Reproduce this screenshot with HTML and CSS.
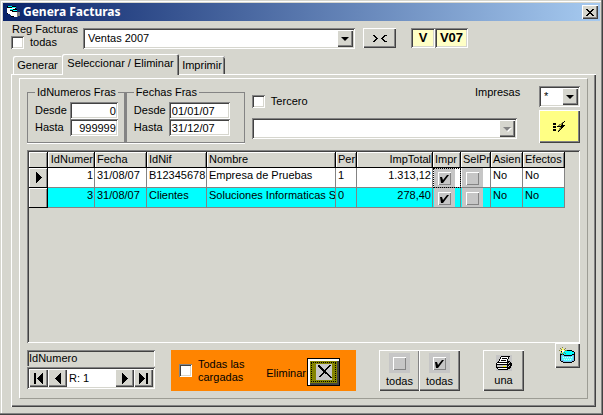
FILE: index.html
```html
<!DOCTYPE html>
<html lang="es">
<head>
<meta charset="utf-8">
<title>Genera Facturas</title>
<meta name="viewport" content="width=device-width, initial-scale=1">
<link rel="stylesheet" href="styles.css">
</head>
<body>
<main class="window">
  <header class="titlebar">
    <svg class="app-icon" width="14" height="14" viewBox="0 0 14 14" shape-rendering="crispEdges" aria-hidden="true">
      <path fill="#808080" d="M10 7h3v4h-3zM9 11h2v1H9z"/>
      <path fill="#000" d="M0 1h9v3h1v8H4V9H0z"/>
      <path fill="#0ff" d="M1 1h4v1h4v1H5V2H1z"/>
      <path fill="#fff" d="M1 3h7v1H3v5H1V8H0V3z"/>
      <path fill="#0ff" d="M3 4h3v1h4v1H6V5H3z"/>
      <path fill="#fff" d="M3 6h2v1h5v5H7v-1H4v-1H3z"/>
    </svg>
    <h1 class="title">Genera Facturas</h1>
    <button class="btn close" type="button" aria-label="Cerrar">
      <svg width="8" height="7" viewBox="0 0 8 7" shape-rendering="crispEdges"><path d="M0 0h2v1h1v1h2V1h1V0h2v1H7v1H6v1H5v1h1v1h1v1h1v1H6V6H5V5H3v1H2v1H0V6h1V5h1V4h1V3H2V2H1V1H0z"/></svg>
    </button>
  </header>

  <div class="toolbar">
    <div class="register">
      <span>Reg Facturas</span>
      <label class="check-label"><input class="check" type="checkbox"> todas</label>
    </div>
    <div class="combo combo-register">
      <select aria-label="Registro de facturas"><option>Ventas 2007</option></select>
      <span class="btn arrow"></span>
    </div>
    <button class="btn swap" type="button" aria-label="Intercambiar">
      <svg width="14" height="7" viewBox="0 0 14 7" shape-rendering="crispEdges"><path d="M0 0h2v1h1v1h1v1h1v1H4v1H3v1H2v1H0V6h1V5h1V4h1V3H2V2H1V1H0zM14 0h-3v1h-1v1H9v1H8v1h1v1h1v1h1v1h3V6h-2V5h-1V4h-1V3h1V2h1V1h2z"/></svg>
    </button>
    <div class="codes">
      <output class="code code-short">V</output>
      <output class="code">V07</output>
    </div>
  </div>

  <section class="tabs">
    <div class="tablist" role="tablist">
      <button class="tab tab-first" role="tab" type="button">Generar</button>
      <button class="tab selected" role="tab" type="button" aria-selected="true">Seleccionar / Eliminar</button>
      <button class="tab tab-last" role="tab" type="button">Imprimir</button>
    </div>
    <div class="page" role="tabpanel">
      <div class="frame">
        <div class="filters">
          <fieldset class="range range-ids">
            <legend>IdNumeros Fras</legend>
            <label for="id-from">Desde</label><input id="id-from" class="field number" type="text" value="0">
            <label for="id-to">Hasta</label><input id="id-to" class="field number" type="text" value="999999">
          </fieldset>
          <fieldset class="range range-dates">
            <legend>Fechas Fras</legend>
            <label for="date-from">Desde</label><input id="date-from" class="field" type="text" value="01/01/07">
            <label for="date-to">Hasta</label><input id="date-to" class="field" type="text" value="31/12/07">
          </fieldset>
          <div class="third">
            <label class="check-label"><input class="check" type="checkbox"> Tercero</label>
            <div class="combo">
              <select aria-label="Tercero" disabled><option></option></select>
              <span class="btn arrow arrow-off"></span>
            </div>
          </div>
          <label class="printed-label" for="printed">Impresas</label>
          <div class="printed">
            <div class="combo">
              <select id="printed"><option>*</option></select>
              <span class="btn arrow"></span>
            </div>
            <button class="btn run" type="button" aria-label="Filtrar">
              <svg width="13" height="12" viewBox="0 0 13 12" shape-rendering="crispEdges">
                <path d="M0 2h3v2H0zM0 5h3v2H0zM0 8h3v2H0z"/>
                <path fill="#848442" d="M6 3h2v1H7v1H5V4h1zM9 1h2v1h-1v2H8V2h1zM8 6h1v1H8v1H7v1H6v1H5V9h1V7h1V6z"/>
                <path fill="#ff0" d="M7 4h2v1H8v1H6V5h1z"/>
                <path d="M11 0h1v1h-1v1h-1v2h2v1h-1v1h-1v1H9v1H8v1H7v1H6v1H5v-1h1V9h1V8h1V6H5V5h1v0h2V4h1V2h1V1h1zM4 5h1v1H4z"/>
              </svg>
            </button>
          </div>
        </div>

        <div class="grid">
          <table>
            <colgroup>
              <col class="c-mark"><col class="c-id"><col class="c-date"><col class="c-nif"><col class="c-name"><col class="c-per"><col class="c-total"><col class="c-impr"><col class="c-sel"><col class="c-asien"><col class="c-efec">
            </colgroup>
            <thead>
              <tr><th></th><th class="right">IdNumer</th><th>Fecha</th><th>IdNif</th><th>Nombre</th><th>Per</th><th class="right">ImpTotal</th><th>Impr</th><th>SelPr</th><th>Asien</th><th>Efectos</th></tr>
            </thead>
            <tbody>
              <tr>
                <th scope="row"><svg class="marker" width="6" height="11" viewBox="0 0 6 11" shape-rendering="crispEdges"><path d="M0 0h1v1h1v1h1v1h1v1h1v1h1v1H5v1H4v1H3v1H2v1H1v1H0z"/></svg></th>
                <td class="right">1</td><td>31/08/07</td><td>B12345678</td><td>Empresa de Pruebas</td><td>1</td><td class="right">1.313,12</td>
                <td class="tick current"><span class="patch"><input class="box" type="checkbox" checked aria-label="Impr"></span></td>
                <td class="tick"><span class="patch"><input class="box" type="checkbox" aria-label="SelPr"></span></td>
                <td>No</td><td>No</td>
              </tr>
              <tr class="alt">
                <th scope="row"></th>
                <td class="right">3</td><td>31/08/07</td><td>Clientes</td><td>Soluciones Informaticas S</td><td>0</td><td class="right">278,40</td>
                <td class="tick"><span class="patch"><input class="box" type="checkbox" checked aria-label="Impr"></span></td>
                <td class="tick"><span class="patch"><input class="box" type="checkbox" aria-label="SelPr"></span></td>
                <td>No</td><td>No</td>
              </tr>
            </tbody>
          </table>
        </div>

        <div class="actions">
          <div class="record">
            <output class="record-field">IdNumero</output>
            <div class="navigator">
              <button class="btn nav" type="button" aria-label="Primero"><svg width="9" height="11" viewBox="0 0 9 11" shape-rendering="crispEdges"><path d="M0 0h2v11H0zM8 0h1v11H8v-1H7V9H6V8H5V7H4V6H3V5h1V4h1V3h1V2h1V1h1z"/></svg></button>
              <button class="btn nav" type="button" aria-label="Anterior"><svg width="6" height="11" viewBox="0 0 6 11" shape-rendering="crispEdges"><path d="M5 0h1v11H5v-1H4V9H3V8H2V7H1V6H0V5h1V4h1V3h1V2h1V1h1z"/></svg></button>
              <output class="position">R: 1</output>
              <button class="btn nav" type="button" aria-label="Siguiente"><svg width="6" height="11" viewBox="0 0 6 11" shape-rendering="crispEdges"><path d="M0 0h1v1h1v1h1v1h1v1h1v1h1v1H5v1H4v1H3v1H2v1H1v1H0z"/></svg></button>
              <button class="btn nav" type="button" aria-label="Último"><svg width="9" height="11" viewBox="0 0 9 11" shape-rendering="crispEdges"><path d="M7 0h2v11H7zM0 0h1v1h1v1h1v1h1v1h1v1h1v1H5v1H4v1H3v1H2v1H1v1H0z"/></svg></button>
            </div>
          </div>
          <div class="delete">
            <label class="check-label"><input class="check" type="checkbox"> <span>Todas las<br>cargadas</span></label>
            <span class="delete-label" id="delete-label">Eliminar</span>
            <button class="delete-btn" type="button" aria-labelledby="delete-label">
              <svg width="16" height="16" viewBox="0 0 16 16" shape-rendering="crispEdges">
                <path fill="#c6c6c6" d="M0 0h16v16H0z"/>
                <path d="M2 1h2v1h1v1h1v1h1v1h1v1h1V5h1V4h1V3h1V2h1V1h2v1h-1v1h-1v1h-1v1h-1v1h-1v2h1v1h1v1h1v1h1v1h1v1h1v1h-2v-1h-1v-1h-1v-1h-1v-1H9V9H8v1H7v1H6v1H5v1H3v-1h1v-1h1v-1h1V9h1V7H6V6H5V5H4V4H3V3H2z"/>
              </svg>
            </button>
          </div>
          <div class="mark-buttons">
            <button class="btn tile" type="button"><span class="patch"><span class="box"></span></span>todas</button>
            <button class="btn tile" type="button"><span class="patch"><span class="box checked"></span></span>todas</button>
          </div>
          <button class="btn tile print" type="button">
            <svg width="16" height="16" viewBox="0 0 16 16" shape-rendering="crispEdges">
              <path fill="#c6c6c6" d="M0 0h16v16H0z"/>
              <path d="M5 1h9v1h-1v2h-1v2h2v1h1v1h1v3h-1v2h-1v1h-2v1H2v-1H1v-1H0V8h1V7h1V6h1V4h1V2h1z"/>
              <path fill="#fff" d="M5 2h7v2h-1v3H3V6h1V4h1zM1 8h10v1H1zM2 13h9v1H2z"/>
              <path d="M6 3h5v1H6zM5 5h5v1H5z"/>
              <path fill="#c6c6c6" d="M1 10h10v2H1zM12 8h1v1h-1zM13 7h1v1h-1zM12 11h1v1h-1zM13 10h1v1h-1z"/>
              <path fill="#ff0" d="M7 11h3v1H7z"/>
            </svg>una
          </button>
          <button class="btn new" type="button" aria-label="Nuevo">
            <svg width="17" height="17" viewBox="0 0 17 17" shape-rendering="crispEdges">
              <path d="M5 3h8v1h2v1h1v9h-1v1h-2v1H4v-1H2v-1H1V6h1V4h3z"/>
              <path fill="#0ff" d="M5 4h8v1h2v2h-2v1H5V7H2V5h3z"/>
              <path fill="#7be" d="M2 8h3v1h8V8h2v6h-2v1H4v-1H2z"/>
              <path fill="#5ff" d="M3 9h2v1h7V9h2v4h-2v1H5v-1H3z"/>
              <path fill="#cff" d="M4 10h1v1H4zM6 10h1v1H6zM8 10h1v1H8zM10 10h1v1h-1zM12 10h1v1h-1zM5 12h1v1H5zM7 12h1v1H7zM9 12h1v1H9zM11 12h1v1h-1z"/>
              <path fill="#848442" d="M3 0h1v8H3zM0 3h8v1H0zM1 1h1v1H1zM6 1h1v1H6zM2 2h1v1H2zM5 2h1v1H5zM1 6h1v1H1zM2 5h1v1H2zM5 5h1v1H5zM6 6h1v1H6z"/>
              <path fill="#ff6" d="M3 1h1v5H3zM1 3h5v1H1zM4 2h1v3H4z"/>
              <path fill="#fff" d="M3 3h2v2H3z"/>
            </svg>
          </button>
        </div>
      </div>
    </div>
  </section>
</main>
</body>
</html>
```
FILE: styles.css
```css
:root {
  --face: #d6d6ce;
  --shade: #848484;
  --dark: #424242;
  --patch: #c6c6c6;
  --sunken: inset 1px 1px var(--shade), inset -1px -1px #fff, inset 2px 2px var(--dark), inset -2px -2px var(--face);
  --raised: inset 1px 1px #fff, inset -1px -1px var(--dark), inset -2px -2px var(--shade);
}

* { box-sizing: border-box; }

body {
  margin: 0;
  background: var(--face);
  color: #000;
  font: 11px/13px "Liberation Sans", Arial, sans-serif;
}

button, input, select { font: inherit; color: inherit; margin: 0; }
svg { display: block; flex: none; }

.window {
  display: flex;
  flex-direction: column;
  min-height: 100vh;
  padding: 3px;
  background: var(--face);
  box-shadow: inset -1px -1px var(--dark), inset -2px -2px var(--shade), inset 1px 1px var(--face), inset 2px 2px #fff;
}

.titlebar {
  display: flex;
  align-items: center;
  height: 18px;
  padding: 0 2px 0 4px;
  background: linear-gradient(90deg, #0a246a, #a6caf0);
}
.title {
  flex: 1;
  margin: 0 0 0 2px;
  color: #fff;
  font: bold 12px/18px "Noto Sans", "Open Sans", sans-serif;
}

.btn {
  display: flex;
  align-items: center;
  justify-content: center;
  flex: none;
  padding: 0;
  border: 0;
  background: var(--face);
  box-shadow: var(--raised);
}
.close { width: 16px; height: 14px; }

.toolbar {
  display: flex;
  align-items: flex-start;
  height: 33px;
  padding: 2px 8px 0;
}
.register { width: 72px; white-space: nowrap; }
.register > span { display: block; margin-left: 1px; }
.check-label { display: flex; align-items: center; gap: 6px; }

.check {
  appearance: none;
  flex: none;
  width: 13px;
  height: 13px;
  background: #fff;
  box-shadow: var(--sunken);
}
.check:checked { background: #000 content-box; padding: 4px; }

.combo {
  display: flex;
  height: 21px;
  padding: 2px;
  background: #fff;
  box-shadow: var(--sunken);
}
.combo select {
  appearance: none;
  flex: 1;
  min-width: 0;
  padding: 0 3px;
  border: 0;
  border-radius: 0;
  background: none;
  outline: 0;
  opacity: 1;
}
.combo-register { width: 272px; margin-top: 5px; }
.arrow { width: 16px; pointer-events: none; }
.arrow::before {
  content: "";
  border: 4px solid transparent;
  border-top-color: #000;
  border-bottom: 0;
}
.arrow-off::before { border-top-color: var(--shade); filter: drop-shadow(1px 1px #fff); }

.swap { width: 33px; height: 20px; margin: 5px 0 0 8px; }
.codes { display: flex; margin: 5px 0 0 15px; }
.code {
  width: 33px;
  height: 20px;
  background: #ffffc6;
  box-shadow: var(--sunken);
  font: bold 13px/20px "Liberation Sans", Arial, sans-serif;
  text-align: center;
}
.code-short { width: 24px; }

.tabs {
  display: flex;
  flex-direction: column;
  flex: 1;
  margin: 0 4px 5px 8px;
}
.tablist { display: flex; align-items: flex-end; height: 20px; padding-left: 2px; }
.tab {
  height: 18px;
  padding: 0;
  border: 0;
  border-radius: 2px 2px 0 0;
  background: var(--face);
  white-space: nowrap;
}
.tab-first { width: 49px; box-shadow: inset 1px 1px #fff; }
.tab-last { width: 46px; box-shadow: inset 0 1px #fff, inset -1px 0 var(--dark), inset -2px 0 var(--shade); }
.tab.selected {
  z-index: 1;
  width: 117px;
  height: 21px;
  margin-bottom: -1px;
  padding-bottom: 2px;
  box-shadow: inset 1px 1px #fff, inset -1px 0 var(--dark), inset -2px 0 var(--shade);
}
.page {
  flex: 1;
  display: flex;
  padding: 4px 8px 8px;
  box-shadow: inset 1px 1px #fff, inset -1px -1px var(--dark), inset -2px -2px var(--shade);
}
.frame {
  flex: 1;
  min-width: 0;
  display: flex;
  flex-direction: column;
  padding: 7px;
  border: 1px solid #fff;
  border-right-color: #9c9c94;
  border-bottom-color: #9c9c94;
}

.filters { display: flex; align-items: flex-start; height: 64px; }
.range {
  display: grid;
  grid-template-columns: 35px 1fr;
  grid-auto-rows: 17px;
  align-items: center;
  height: 57px;
  margin: 0;
  padding: 3px 6px 0 7px;
  border: 1px solid var(--shade);
  box-shadow: 0 1px #fff;
}
.range legend { height: 13px; padding: 0 2px; white-space: nowrap; }
.range-ids { width: 97px; }
.range-dates { width: 120px; padding-right: 14px; border-left-width: 2px; }
.field {
  width: 100%;
  min-width: 0;
  height: 17px;
  padding: 2px 3px;
  border: 0;
  background: #fff;
  box-shadow: var(--sunken);
}
.number { padding-right: 2px; text-align: right; }
.third { flex: 1; margin: 9px 0 0 7px; }
.third .combo { margin-top: 10px; }
.printed-label { margin-left: -42px; width: 64px; }
.printed { width: 41px; }
.run { width: 41px; height: 33px; margin-top: 3px; background: #ffff84; }

.grid {
  flex: 1;
  padding: 2px;
  overflow: hidden;
  box-shadow: inset 1px 1px var(--shade), inset -1px -1px #fff, inset 2px 2px var(--dark);
}
table { width: 536px; border-collapse: separate; border-spacing: 0; table-layout: fixed; }
.c-mark { width: 19px; }
.c-id { width: 47px; }
.c-date { width: 52px; }
.c-nif { width: 60px; }
.c-name { width: 129px; }
.c-per { width: 21px; }
.c-total { width: 76px; }
.c-impr { width: 28px; }
.c-sel { width: 30px; }
.c-asien { width: 32px; }
.c-efec { width: 42px; }
th, td {
  padding: 0 0 0 2px;
  overflow: hidden;
  font-weight: normal;
  text-align: left;
  vertical-align: top;
  white-space: nowrap;
}
th {
  height: 16px;
  border-right: 1px solid #000;
  border-bottom: 1px solid #000;
  box-shadow: inset 1px 1px #fff, inset -1px 0 var(--shade);
  line-height: 15px;
}
tbody th { padding-left: 7px; vertical-align: middle; }
td {
  height: 20px;
  border-right: 1px solid var(--shade);
  border-bottom: 1px solid var(--shade);
  background: #fff;
  line-height: 15px;
}
.alt td { background: #0ff; }
.right { padding-right: 1px; text-align: right; }
.tick { padding: 0 0 0 1px; }
.current { outline: 1px dotted #000; outline-offset: -1px; }
.patch { display: block; width: 21px; height: 19px; padding: 4px; background: var(--patch); }
.box {
  appearance: none;
  display: block;
  width: 13px;
  height: 13px;
  background: var(--patch);
  box-shadow: inset 1px 1px #fff, inset -1px -1px var(--shade);
}
.box:checked::before, .box.checked::before {
  content: "";
  display: block;
  width: 13px;
  height: 13px;
  background: #000;
  clip-path: polygon(2px 5px, 4px 5px, 5px 8px, 9px 3px, 11px 3px, 5px 11px, 3px 11px);
}

.actions { display: flex; align-items: flex-start; }
.record { width: 128px; margin-top: 7px; }
.record-field {
  display: block;
  height: 16px;
  padding: 2px;
  box-shadow: inset 1px 1px var(--shade), inset -1px 0 #fff, inset 2px 2px var(--dark);
}
.navigator {
  display: flex;
  height: 22px;
  margin-top: 1px;
  padding: 2px;
  background: #fff;
  box-shadow: var(--sunken);
}
.nav { width: 19px; }
.position { flex: 1; padding: 3px 2px; }

.delete {
  display: flex;
  align-items: center;
  width: 185px;
  height: 41px;
  margin: 7px 0 0 16px;
  padding: 0 16px 0 8px;
  background: #ff8400;
}
.delete-label { margin: 5px 0 0 auto; padding-right: 1px; }
.delete-btn {
  display: flex;
  align-items: center;
  justify-content: center;
  width: 33px;
  height: 28px;
  margin-top: 2px;
  padding: 0;
  border: 1px solid #000;
  background: #848400;
  box-shadow: inset 2px 2px #fff, inset -2px -2px var(--dark);
  outline: 1px dotted #000;
  outline-offset: -5px;
}

.mark-buttons { display: flex; margin: 7px 0 0 23px; }
.tile {
  flex-direction: column;
  justify-content: flex-start;
  gap: 2px;
  width: 41px;
  height: 41px;
  padding-top: 3px;
}
.tile + .tile { margin-left: -1px; }
.tile .patch { height: 20px; }
.print { margin: 7px 0 0 23px; padding-top: 5px; gap: 3px; }
.new { width: 25px; height: 25px; margin-left: auto; }
```
